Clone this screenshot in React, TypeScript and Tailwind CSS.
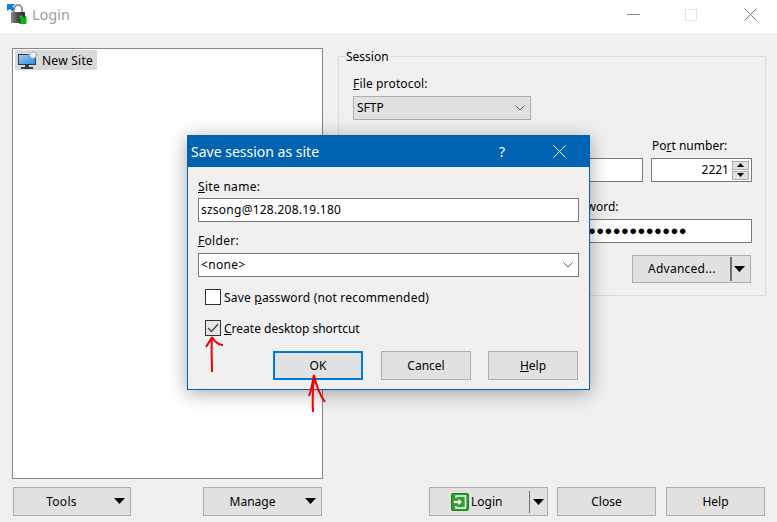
import React from "react";

const Btn = ({ className = "", children }: { className?: string; children: React.ReactNode }) => (
  <div className={"h-[29px] shrink-0 flex items-center justify-center bg-[#e1e1e1] border border-[#adadad] text-[#000] " + className}>{children}</div>
);

const Caret = () => (
  <svg width="11" height="6" viewBox="0 0 11 6"><path d="M0 0h11L5.500 6z" fill="#000" /></svg>
);

const Chevron = () => (
  <svg width="10" height="6" viewBox="0 0 10 6" fill="none"><path d="M.5.5L5 5 9.500.5" stroke="#555" strokeWidth="1" /></svg>
);

const LockIcon = () => (
  <svg width="21" height="21" viewBox="0 0 21 21" className="shrink-0">
    <defs>
      <linearGradient id="lockBody" x1="0" x2="1" y1="0" y2="0">
        <stop offset="0" stopColor="#8a8a8a" />
        <stop offset="0.5" stopColor="#4a4a4a" />
        <stop offset="1" stopColor="#2a2a2a" />
      </linearGradient>
    </defs>
    <path d="M7 9V5a4 4 0 0 1 8 0v4" fill="none" stroke="#9a9a9a" strokeWidth="2.200" />
    <rect x="4" y="8" width="14" height="11" rx="1" fill="url(#lockBody)" />
    <path d="M0 0h8L5.500 2.500 7.500 5 5 7.500 3 5 0 7z" fill="#1a7de0" />
    <path d="M12 12l2.500-1 2.500 3 2.500-2.500V20h-8l2.500-2.500z" fill="#0cb418" />
  </svg>
);

const SiteIcon = () => (
  <svg width="20" height="19" viewBox="0 0 20 19" className="shrink-0">
    <defs>
      <linearGradient id="screen" x1="0" x2="1" y1="0" y2="1">
        <stop offset="0" stopColor="#9fd0f7" />
        <stop offset="1" stopColor="#2f86de" />
      </linearGradient>
    </defs>
    <rect x="0.500" y="3.500" width="17" height="10" fill="url(#screen)" stroke="#2b3d52" />
    <rect x="7" y="14" width="4" height="2" fill="#2b3d52" />
    <rect x="3" y="16" width="12" height="2" fill="#2b3d52" />
    <path d="M15 0l1 2 2-1-.5 2.200 2.300.8-2.300 1 .5 2-2-.8-1 1.800-1-1.800-2 .8.5-2-2.300-1 2.300-.8L12 1l2 1z" fill="#f4f7fa" stroke="#8da0b2" strokeWidth=".5" />
  </svg>
);

const LoginIcon = () => (
  <svg width="18" height="18" viewBox="0 0 18 18" className="shrink-0">
    <rect x="0.500" y="0.500" width="17" height="17" rx="1.500" fill="#2ea02f" stroke="#1c7c20" />
    <path d="M5 5V3h9.500v12H5v-2" fill="none" stroke="#f2fbf2" strokeWidth="1.500" />
    <path d="M2.500 7.500H7V5l4.500 4L7 13v-2.500H2.500z" fill="#f2fbf2" stroke="#15701a" strokeWidth=".5" />
  </svg>
);

export default function App() {
  return (
    <div className="relative w-[777px] h-[522px] overflow-hidden bg-[#f0f0f0] flex flex-col text-[12px] text-[#000] font-['Noto_Sans','Open_Sans',sans-serif]">
      {/* title bar */}
      <div className="h-[33px] shrink-0 bg-white flex items-center pl-[7px] pb-[4px]">
        <LockIcon />
        <span className="ml-[4px] text-[14.500px] text-[#a0a0a0]">Login</span>
        <div className="ml-auto flex items-center pr-[20px]">
          <div className="w-[13px] h-px bg-[#8a8a8a]" />
          <div className="ml-[45px] w-[12px] h-[12px] border border-[#e3e3e3]" />
          <svg className="ml-[47px]" width="13" height="13" viewBox="0 0 13 13"><path d="M.5.5l12 12M12.500.5l-12 12" stroke="#7a7a7a" fill="none" /></svg>
        </div>
      </div>

      {/* content */}
      <div className="flex pl-[12px] pt-[15px]">
        <div className="w-[311px] h-[431px] shrink-0 bg-white border border-[#828790] pl-[2px] pt-px">
          <div className="w-[82px] h-[20px] flex items-center bg-[#d9d9d9] pl-[3px]">
            <SiteIcon />
            <span className="ml-[4px] pt-[2px] tracking-[0.25px]">New Site</span>
          </div>
        </div>

        <div className="ml-[15px] mt-[8px] w-[428px] h-[240px] shrink-0 border border-[#dcdcdc] flex flex-col pl-[14px] pr-[13px]">
          <div className="-mt-[9px] -ml-[7px] h-[17px] leading-[17px] w-fit bg-[#f0f0f0] pr-px">Session</div>
          <div className="mt-[10px] h-[17px] leading-[17px] tracking-[0.15px]"><u>F</u>ile protocol:</div>
          <div className="mt-[4px] w-[178px] h-[24px] bg-[#e1e1e1] border border-[#adadad] flex items-center justify-between pl-[3px] pr-[5px]">
            <span>SFTP</span>
            <Chevron />
          </div>
          <div className="mt-[17px] flex gap-[8px]">
            <div className="w-[290px] shrink-0">
              <div className="h-[17px] leading-[17px]"><u>H</u>ost name:</div>
              <div className="mt-[4px] h-[24px] bg-white border border-[#7a7a7a]" />
            </div>
            <div className="w-[101px] shrink-0">
              <div className="h-[17px] leading-[17px] pl-px">Po<u>r</u>t number:</div>
              <div className="mt-[4px] h-[24px] bg-white border border-[#7a7a7a] flex items-center justify-end pr-[2px]">
                <span className="mr-[3px]">2221</span>
                <div className="flex flex-col gap-px">
                  <div className="w-[17px] h-[9px] bg-[#e1e1e1] border border-[#adadad] flex items-center justify-center">
                    <svg width="7" height="4" viewBox="0 0 7 4"><path d="M3.500 0L7 4H0z" fill="#000" /></svg>
                  </div>
                  <div className="w-[17px] h-[9px] bg-[#e1e1e1] border border-[#adadad] flex items-center justify-center">
                    <svg width="7" height="4" viewBox="0 0 7 4"><path d="M0 0h7L3.500 4z" fill="#000" /></svg>
                  </div>
                </div>
              </div>
            </div>
          </div>
          <div className="mt-[16px] flex">
            <div className="w-[140px] shrink-0">
              <div className="h-[17px] leading-[17px]"><u>U</u>ser name:</div>
              <div className="mt-[4px] h-[24px] bg-white border border-[#7a7a7a]" />
            </div>
            <div className="ml-auto w-[191px] shrink-0">
              <div className="h-[17px] leading-[17px]"><u>P</u>assword:</div>
              <div className="mt-[4px] h-[24px] bg-white border border-[#7a7a7a] flex items-center justify-end pr-[64px] text-[13px] tracking-[0.4px]">
                ●●●●●●●●●●●●●
              </div>
            </div>
          </div>
          <div className="mt-[12px] flex justify-end pr-px">
            <Btn className="w-[119px] !h-[28px] pl-[15px] pr-[5px] !justify-between">
              <span className="tracking-[0.25px]">Advanced...</span>
              <span className="flex items-center">
                <span className="w-[2px] h-[24px] bg-[#707070] mr-[2px]" />
                <Caret />
              </span>
            </Btn>
          </div>
        </div>
      </div>

      {/* bottom buttons */}
      <div className="mt-[8px] pl-[13px] flex">
        <Btn className="w-[118px] relative">
          <span className="mr-[21px] tracking-[0.3px]">Tools</span>
          <span className="absolute right-[5px] top-[10px] flex"><Caret /></span>
        </Btn>
        <Btn className="ml-[72px] w-[119px] relative">
          <span className="mr-[20px]">Manage</span>
          <span className="absolute right-[5px] top-[10px] flex"><Caret /></span>
        </Btn>
        <Btn className="ml-[107px] w-[119px] !justify-start pl-[21px] pr-[3px]">
          <LoginIcon />
          <span className="ml-[2px]">Login</span>
          <span className="ml-auto flex items-center">
            <span className="w-[1px] h-[22px] bg-[#707070] mr-[3px]" />
            <Caret />
          </span>
        </Btn>
        <Btn className="ml-[9px] w-[99px]">Close</Btn>
        <Btn className="ml-[10px] w-[99px]">Help</Btn>
      </div>

      {/* dialog */}
      <div className="absolute left-[187px] top-[135px] w-[403px] h-[255px] bg-[#f0f0f0] border border-[#0063b1] shadow-[0_3px_18px_rgba(0,0,0,0.35)] flex flex-col">
        <div className="h-[31px] shrink-0 bg-[#0063b1] flex items-center pl-[3px] text-white text-[14px]">
          <span>Save session as site</span>
          <span className="ml-auto mr-[48px]">?</span>
          <svg className="mr-[23px]" width="13" height="13" viewBox="0 0 13 13"><path d="M.5.5l12 12M12.500.5l-12 12" stroke="#fff" fill="none" /></svg>
        </div>
        <div className="flex flex-col pl-[10px] pr-[10px] flex-1">
          <div className="mt-[11px] h-[17px] leading-[17px] tracking-[0.3px]"><u>S</u>ite name:</div>
          <div className="mt-[3px] h-[24px] w-[381px] bg-white border border-[#7a7a7a] flex items-center pl-[2px] tracking-[0.24px]">szsong@128.208.19.180</div>
          <div className="mt-[10px] h-[17px] leading-[17px] tracking-[0.3px]"><u>F</u>older:</div>
          <div className="mt-[4px] h-[24px] w-[381px] bg-white border border-[#7a7a7a] flex items-center justify-between pl-[2px] pr-[5px]">
            <span className="tracking-[0.3px]">&lt;none&gt;</span>
            <Chevron />
          </div>
          <div className="mt-[12px] ml-[7px] flex items-center h-[16px]">
            <div className="w-[16px] h-[16px] bg-white border border-[#333]" />
            <span className="ml-[3px] pt-[2px] tracking-[0.2px]">Save <u>p</u>assword (not recommended)</span>
          </div>
          <div className="mt-[15px] ml-[7px] flex items-center h-[16px]">
            <div className="w-[16px] h-[16px] bg-[#e6e6e6] border border-[#333] flex items-center justify-center">
              <svg width="12" height="10" viewBox="0 0 12 10" fill="none"><path d="M1 5l3.500 3.500L11 1" stroke="#444" strokeWidth="1.300" /></svg>
            </div>
            <span className="ml-[3px] pt-[2px]"><u>C</u>reate desktop shortcut</span>
          </div>
          <div className="mt-[15px] flex pl-[75px]">
            <Btn className="w-[90px] !border-2 !border-[#0078d7]">OK</Btn>
            <Btn className="ml-[18px] w-[90px]">Cancel</Btn>
            <Btn className="ml-[17px] w-[90px]"><span><u>H</u>elp</span></Btn>
          </div>
        </div>
      </div>

      {/* hand drawn arrows */}
      <svg className="absolute left-0 top-0 pointer-events-none" width="777" height="522" viewBox="0 0 777 522" fill="none">
        <path d="M212 372C212 360 211 348 212 337M212 337C210 341 208 344 206 347M212 337C215 342 218 345 223 345" stroke="#f00000" strokeWidth="2" />
        <path d="M313 412C312 400 313 388 314 375M314 375C312 385 311 391 309 396M314 375C316 385 320 395 325 402" stroke="#f00000" strokeWidth="2" />
      </svg>
    </div>
  );
}
